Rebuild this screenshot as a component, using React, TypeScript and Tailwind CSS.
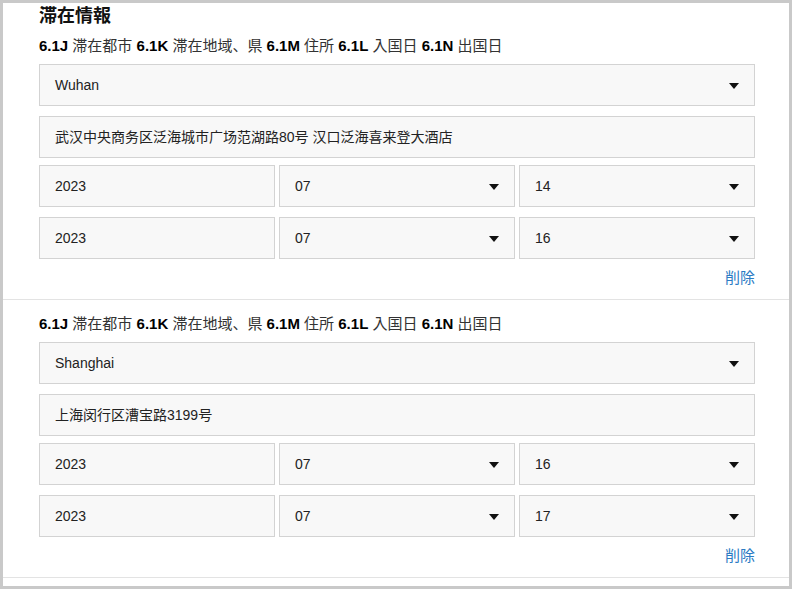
const font = { fontFamily: '"Liberation Sans", "Noto Sans CJK JP", sans-serif' };

type Stay = {
  city: string;
  address: string;
  entry: [string, string, string];
  exit: [string, string, string];
};

const stays: Stay[] = [
  {
    city: 'Wuhan',
    address: '武汉中央商务区泛海城市广场范湖路80号 汉口泛海喜来登大酒店',
    entry: ['2023', '07', '14'],
    exit: ['2023', '07', '16'],
  },
  {
    city: 'Shanghai',
    address: '上海闵行区漕宝路3199号',
    entry: ['2023', '07', '16'],
    exit: ['2023', '07', '17'],
  },
];

function Caret() {
  return (
    <svg width="10" height="6" viewBox="0 0 10 6" className="shrink-0">
      <path d="M0 0 H10 L5 6 Z" fill="#111" />
    </svg>
  );
}

function Box({ value, select }: { value: string; select?: boolean }) {
  return (
    <div className="h-[42px] flex items-center justify-between pl-[15px] pr-[15px] pt-[1px] bg-[#f8f8f8] border border-[#d3d3d3] text-[14px] text-[#222]">
      <span>{value}</span>
      {select && <Caret />}
    </div>
  );
}

function DateRow({ v }: { v: [string, string, string] }) {
  return (
    <div className="grid grid-cols-3 gap-[4px]">
      <Box value={v[0]} />
      <Box value={v[1]} select />
      <Box value={v[2]} select />
    </div>
  );
}

function Legend() {
  return (
    <div className="text-[15px] leading-[20px] text-[#333]">
      <b className="text-black">6.1J</b> 滞在都市 <b className="text-black">6.1K</b> 滞在地域、県{' '}
      <b className="text-black">6.1M</b> 住所 <b className="text-black">6.1L</b> 入国日{' '}
      <b className="text-black">6.1N</b> 出国日
    </div>
  );
}

function StayBlock({ stay, first }: { stay: Stay; first?: boolean }) {
  return (
    <section className={`pl-[36px] pr-[34px] pb-[11px] border-b border-[#e3e3e3] ${first ? 'pt-[1px]' : 'pt-[14px]'}`}>
      {first && <h2 className="text-[18px] leading-[24px] font-bold text-[#111] mb-[8px]">滞在情報</h2>}
      <Legend />
      <div className="mt-[8px]">
        <Box value={stay.city} select />
      </div>
      <div className="mt-[10px]">
        <Box value={stay.address} />
      </div>
      <div className="mt-[7px]">
        <DateRow v={stay.entry} />
      </div>
      <div className="mt-[10px]">
        <DateRow v={stay.exit} />
      </div>
      <div className="mt-[9px] flex justify-end">
        <a className="text-[15px] leading-[20px] text-[#2b7bc4] cursor-pointer">削除</a>
      </div>
    </section>
  );
}

export default function App() {
  return (
    <div style={font} className="w-[792px] h-[589px] bg-[#c9c9c9] pt-[3px] pl-[3px] pr-[3px] pb-[3px]">
      <div className="w-full h-full bg-white overflow-hidden">
        {stays.map((s, i) => (
          <StayBlock key={i} stay={s} first={i === 0} />
        ))}
      </div>
    </div>
  );
}
